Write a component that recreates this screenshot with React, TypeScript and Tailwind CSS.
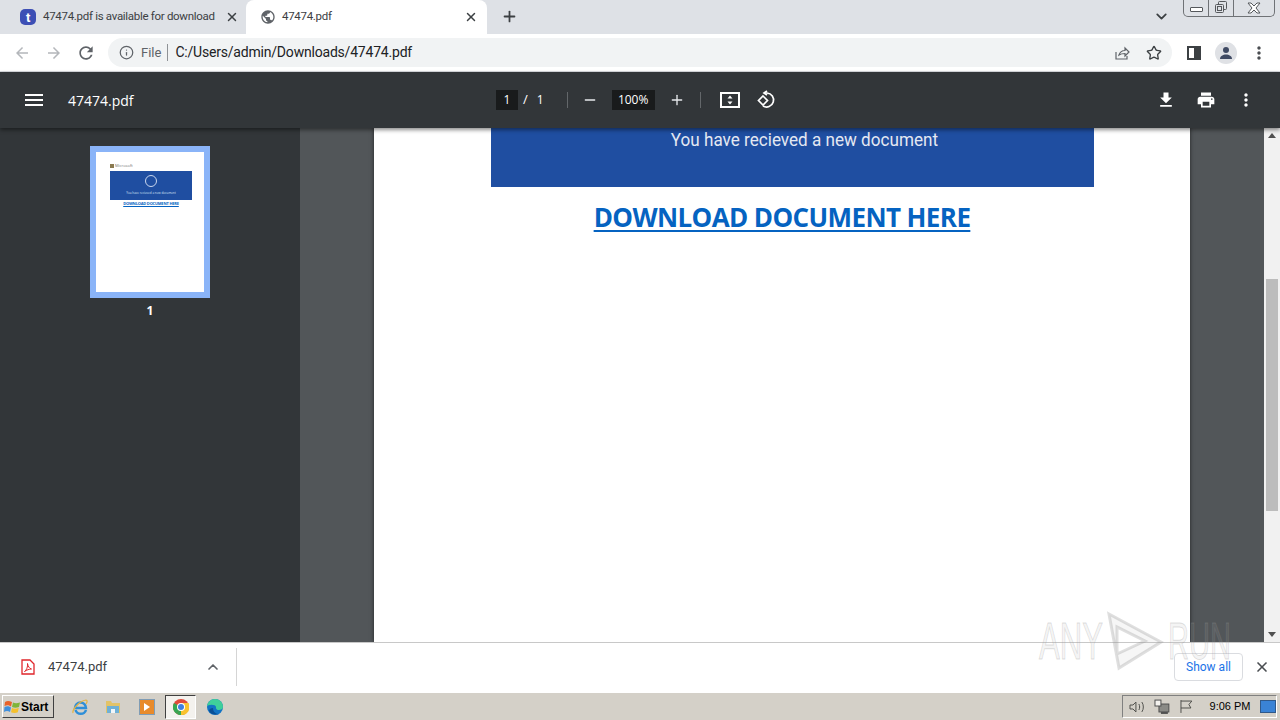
import { ChevronDown, ChevronUp, Info, Minus, Plus, Star, X } from "lucide-react";

const P = ({ d, size = 24, className = "" }: { d: string; size?: number; className?: string }) => (
  <svg width={size} height={size} viewBox="0 0 24 24" fill="currentColor" className={className}>
    <path d={d} />
  </svg>
);

const icons = {
  back: "M20 11H7.83l5.59-5.59L12 4l-8 8 8 8 1.41-1.41L7.83 13H20v-2z",
  forward: "M4 11h12.17l-5.59-5.59L12 4l8 8-8 8-1.41-1.41L16.17 13H4v-2z",
  reload:
    "M17.65 6.35C16.2 4.9 14.21 4 12 4c-4.42 0-7.99 3.58-7.99 8s3.57 8 7.99 8c3.73 0 6.84-2.55 7.73-6h-2.08c-.82 2.33-3.04 4-5.65 4-3.31 0-6-2.69-6-6s2.69-6 6-6c1.66 0 3.14.69 4.22 1.78L13 11h7V4l-2.35 2.35z",
  dots: "M12 8c1.1 0 2-.9 2-2s-.9-2-2-2-2 .9-2 2 .9 2 2 2zm0 2c-1.1 0-2 .9-2 2s.9 2 2 2 2-.9 2-2-.9-2-2-2zm0 6c-1.1 0-2 .9-2 2s.9 2 2 2 2-.9 2-2-.9-2-2-2z",
  globe:
    "M12 2C6.48 2 2 6.48 2 12s4.48 10 10 10 10-4.48 10-10S17.52 2 12 2zm-1 17.93c-3.95-.49-7-3.85-7-7.93 0-.62.08-1.21.21-1.79L9 15v1c0 1.1.9 2 2 2v1.93zm6.9-2.54c-.26-.81-1-1.39-1.9-1.39h-1v-3c0-.55-.45-1-1-1H8v-2h2c.55 0 1-.45 1-1V7h2c1.1 0 2-.9 2-2v-.41c2.93 1.19 5 4.06 5 7.41 0 2.08-.8 3.97-2.1 5.39z",
  download: "M19 9h-4V3H9v6H5l7 7 7-7zM5 18v2h14v-2H5z",
  print:
    "M19 8H5c-1.66 0-3 1.34-3 3v6h4v4h12v-4h4v-6c0-1.66-1.34-3-3-3zm-3 11H8v-5h8v5zm3-7c-.55 0-1-.45-1-1s.45-1 1-1 1 .45 1 1-.45 1-1 1zm-1-9H6v4h12V3z",
  menu: "M3 18h18v-2H3v2zm0-5h18v-2H3v2zm0-7v2h18V6H3z",
};

const TabStrip = () => (
  <div className="flex h-[34px] shrink-0 items-start bg-[#dee1e6] font-['Roboto',sans-serif] text-[11.5px] tracking-[-0.3px] text-[#3c4043]">
    <div className="flex h-[34px] w-[246px] items-center pl-[20px]">
      <div className="flex h-[16px] w-[16px] items-center justify-center rounded-[5px] bg-[#3d4fb5] text-[13px] font-bold leading-none text-white">
        t
      </div>
      <span className="ml-[7px] w-[172px] whitespace-nowrap">47474.pdf is available for download</span>
      <X size={14} strokeWidth={2.5} className="ml-[10px] text-[#3c4043]" />
    </div>
    <div className="flex h-[34px] w-[241px] items-center rounded-t-[8px] bg-white pl-[14px]">
      <P d={icons.globe} size={16} className="text-[#5f6368]" />
      <span className="ml-[6px] w-[182px]">47474.pdf</span>
      <X size={14} strokeWidth={2.5} className="text-[#3c4043]" />
    </div>
    <Plus size={17} strokeWidth={2.5} className="ml-[14px] mt-[8px] text-[#3c4043]" />
    <ChevronDown size={17} strokeWidth={2.5} className="ml-[635px] mt-[8px] text-[#3c4043]" />
    <div className="ml-[13px] flex h-[17px] w-[92px] rounded-b-[5px] border border-t-0 border-[#6f7276] text-[#55585c]">
      <div className="flex w-[25px] items-center justify-center border-r border-[#6f7276]">
        <div className="mt-[3px] h-[5px] w-[13px] rounded-[1px] border border-[#55585c] bg-white" />
      </div>
      <div className="flex w-[25px] items-center justify-center border-r border-[#6f7276]">
        <svg width="14" height="14" viewBox="0 0 14 14" fill="none" stroke="currentColor">
          <rect x="4.5" y="0.5" width="8" height="8" rx="1" />
          <rect x="1.5" y="3.5" width="8" height="8" rx="1" fill="#dee1e6" />
          <rect x="3.5" y="5.5" width="4" height="4" />
        </svg>
      </div>
      <div className="flex flex-1 items-center justify-center">
        <svg width="14" height="12" viewBox="0 0 14 12" fill="white" stroke="currentColor">
          <path d="M1 1h3l3 3 3-3h3L9 6l4 5h-3L7 8l-3 3H1l4-5z" />
        </svg>
      </div>
    </div>
  </div>
);

const Toolbar = () => (
  <div className="flex h-[38px] shrink-0 items-center border-b border-[#dadce0] bg-white pl-[13px] font-['Roboto',sans-serif] text-[#5f6368]">
    <P d={icons.back} size={18} className="text-[#b4b7bb]" />
    <P d={icons.forward} size={18} className="ml-[14px] text-[#b4b7bb]" />
    <P d={icons.reload} size={20} className="ml-[13px] text-[#5f6368]" />
    <div className="ml-[12px] flex h-[29px] w-[1064px] items-center rounded-full bg-[#f1f3f4] pl-[11px] pr-[10px]">
      <Info size={15} strokeWidth={2} />
      <span className="ml-[7px] text-[13px] text-[#5f6368]">File</span>
      <div className="ml-[6px] h-[17px] w-px bg-[#8f9296]" />
      <span className="ml-[7px] text-[14px] tracking-[-0.2px] text-[#202124]">C:/Users/admin/Downloads/47474.pdf</span>
      <svg
        width="16"
        height="16"
        viewBox="0 0 16 16"
        fill="none"
        stroke="currentColor"
        strokeWidth="1.2"
        className="ml-auto"
      >
        <path d="M2 7v7h11v-3M5 10c1-3 3-4.5 6-4.5V3l4 4-4 4V8.500c-2.500 0-4.500.5-6 1.500z" />
      </svg>
      <Star size={16} strokeWidth={2} className="ml-[16px] text-[#3c4043]" />
    </div>
    <div className="ml-[15px] flex h-[14px] w-[14px] justify-end border-2 border-[#3c4043] bg-white">
      <div className="h-full w-[5px] bg-[#3c4043]" />
    </div>
    <div className="ml-[14px] flex h-[22px] w-[22px] items-center justify-center overflow-hidden rounded-full bg-[#dfe1e5]">
      <svg width="14" height="14" viewBox="0 0 14 14" fill="#3f4a63">
        <circle cx="7" cy="4" r="3" />
        <path d="M1 13c0-3 3-4.500 6-4.500s6 1.500 6 4.500z" />
      </svg>
    </div>
    <P d={icons.dots} size={20} className="ml-[12px] text-[#4a4d51]" />
  </div>
);

const PdfToolbar = () => (
  <div className="relative z-10 flex h-[56px] shrink-0 items-center bg-[#323639] pl-[22px] pr-[24px] text-white shadow-[0_2px_4px_rgba(0,0,0,0.45)]">
    <P d={icons.menu} size={24} />
    <span className="ml-[22px] w-[428px] text-[14px] font-medium">47474.pdf</span>
    <div className="flex h-[20px] w-[22px] items-center justify-center bg-[#191b1c] text-[12px] font-medium">1</div>
    <span className="ml-[5px] text-[13px]">/</span>
    <span className="ml-[9px] text-[12px] font-medium">1</span>
    <div className="ml-[23px] h-[16px] w-px bg-[#63676a]" />
    <Minus size={16} strokeWidth={2} className="ml-[14px] text-[#e8eaed]" />
    <div className="ml-[14px] flex h-[20px] w-[43px] items-center justify-center bg-[#191b1c] text-[12px]">100%</div>
    <Plus size={16} strokeWidth={2} className="ml-[14px] text-[#e8eaed]" />
    <div className="ml-[15px] h-[16px] w-px bg-[#63676a]" />
    <svg width="20" height="16" viewBox="0 0 20 16" fill="none" stroke="white" strokeWidth="2" className="ml-[19px]">
      <rect x="1" y="1" width="18" height="14" />
      <path d="M10 3.500l-2.500 3h5zM10 12.500l-2.500-3h5z" fill="white" stroke="none" />
    </svg>
    <svg width="20" height="20" viewBox="0 0 20 20" fill="none" stroke="white" strokeWidth="1.700" className="ml-[16px]">
      <path d="M9 3h2a7 7 0 1 1-4 13" />
      <path d="M11 1L8 3l3 2" />
      <path d="M7 6l4.500 4.500L7 15l-4.500-4.500z" />
    </svg>
    <P d={icons.download} size={20} className="ml-auto" />
    <P d={icons.print} size={20} className="ml-[20px]" />
    <P d={icons.dots} size={20} className="ml-[20px]" />
  </div>
);

const Thumbnail = () => (
  <div className="flex w-[300px] shrink-0 flex-col items-center bg-[#323639] pt-[18px]">
    <div className="h-[152px] w-[120px] border-[6px] border-[#8ab4f8] bg-white pl-[14px] pt-[11px]">
      <div className="flex items-center gap-[1px] text-[4px] leading-[5px] text-[#737373]">
        <div className="h-[4px] w-[4px] bg-[#8a7a50]" />
        Microsoft
      </div>
      <div className="mt-[3px] flex h-[29px] w-[82px] flex-col items-center bg-[#1f4ea1]">
        <div className="mt-[4px] h-[12px] w-[12px] rounded-full border border-[#c9d6ee]" />
        <span className="mt-[4px] whitespace-nowrap text-[3px] leading-[4px] text-[#dbe4f5]">
          You have recieved a new document
        </span>
      </div>
      <div className="mt-[1px] w-[82px] text-center text-[4px] font-bold leading-[6px] tracking-[-0.2px] text-[#0563c1] underline">
        DOWNLOAD DOCUMENT HERE
      </div>
    </div>
    <span className="mt-[4px] text-[12px] font-bold text-white">1</span>
  </div>
);

const Viewer = () => (
  <div className="flex min-h-0 flex-1">
    <Thumbnail />
    <div className="flex flex-1 justify-center overflow-hidden bg-[#525659]">
      <div className="w-[816px] bg-white shadow-[0_0_4px_rgba(0,0,0,0.6)]">
        <div className="ml-[117px] flex h-[59px] w-[603px] justify-center bg-[#1f4ea1] pl-[23px]">
          <span className="mt-[-1px] inline-block h-[26px] scale-x-[0.9] whitespace-nowrap font-['Roboto',sans-serif] text-[19px] leading-[26px] text-[#e4e8f2]">
            You have recieved a new document
          </span>
        </div>
        <div className="mt-[12px] text-center text-[26px] font-bold leading-[36px] tracking-[-0.6px] text-[#0563c1] underline decoration-[2px] underline-offset-[3px]">
          DOWNLOAD DOCUMENT HERE
        </div>
      </div>
    </div>
    <div className="relative flex w-[16px] shrink-0 flex-col items-center bg-[#f1f1f1]">
      <div className="mt-[5px] h-0 w-0 border-x-[4px] border-b-[5px] border-x-transparent border-b-[#505050]" />
      <div className="mt-[141px] h-[232px] w-[12px] bg-[#bcbcbc]" />
      <div className="absolute bottom-[5px] h-0 w-0 border-x-[4px] border-t-[5px] border-x-transparent border-t-[#505050]" />
    </div>
  </div>
);

const DownloadBar = () => (
  <div className="flex h-[50px] shrink-0 items-center border-t border-[#c8c8c8] bg-white pb-[2px] pl-[21px] font-['Roboto',sans-serif] text-[#3c4043]">
    <svg width="14" height="16" viewBox="0 0 14 16" fill="none" stroke="#e0262b" strokeWidth="1.300">
      <path d="M1 1h8l4 4v10H1z" />
      <path d="M3.500 12.500c2-1 3.500-5 3-8 .5 3 2 5 4 5.500-2 0-5 1-7 2.500z" strokeWidth="1" />
    </svg>
    <span className="ml-[13px] w-[157px] text-[13px]">47474.pdf</span>
    <ChevronUp size={16} strokeWidth={2.5} className="text-[#5f6368]" />
    <div className="ml-[15px] h-[38px] w-px bg-[#d5d5d5]" />
    <div className="ml-[937px] flex h-[28px] w-[69px] items-center justify-center rounded-[4px] border border-[#dadce0] bg-white text-[12px] text-[#1a73e8]">
      Show all
    </div>
    <X size={16} strokeWidth={2.5} className="ml-[11px] text-[#4a4d51]" />
  </div>
);

const Taskbar = () => (
  <div className="flex h-[28px] shrink-0 items-center border-t border-white bg-[#d4d0c8] pl-[2px] font-['Liberation_Sans',sans-serif]">
    <div className="flex h-[23px] w-[52px] items-center border border-b-[#404040] border-l-white border-r-[#404040] border-t-white pl-[1px] text-[12px] font-bold text-black">
      <svg width="17" height="16" viewBox="0 0 17 16">
        <path d="M1 3c2-1.500 4-1.500 7 0L7 7.500C4.500 6 3 6 .5 7z" fill="#e8622a" />
        <path d="M9 3.500c2 1 4 1 7 0l-1 4.500c-2.500 1-4.500 1-7 0z" fill="#7fb539" />
        <path d="M.5 8c2.500-1 4-1 6.500.5L6 13c-2-1.500-4-1.500-6 0z" fill="#3f8fdc" />
        <path d="M8 9c2 1 4.500 1 6.800-.2l-1 4.500c-2 1-4.500 1-6.800 0z" fill="#f5c02c" />
      </svg>
      Start
    </div>
    <svg width="18" height="18" viewBox="0 0 18 18" fill="none" className="ml-[17px]">
      <path d="M4 10a5.500 5.500 0 1 1 11 0H4zM15 12a5.500 5.500 0 0 1-10.500 0" stroke="#2f8fd8" strokeWidth="2.500" />
      <path d="M2 15C1 12 8 3 15 2c1.500 0 1.500 2 0 4" stroke="#e3b341" strokeWidth="1.200" />
    </svg>
    <svg width="16" height="16" viewBox="0 0 16 16" className="ml-[16px]">
      <path d="M1 2h5l1 2h8v10H1z" fill="#e3c368" />
      <path d="M2 7h12v7H2z" fill="#6fb0d6" />
      <path d="M6 10h4v4H6z" fill="#f1f6f9" />
    </svg>
    <div className="ml-[18px] flex h-[16px] w-[16px] items-center justify-center border border-[#7f9cb5] bg-[#e88a2a]">
      <div className="h-0 w-0 border-y-[4px] border-l-[6px] border-y-transparent border-l-white" />
    </div>
    <div className="ml-[10px] flex h-[24px] w-[31px] items-center justify-center border border-b-white border-l-[#404040] border-r-white border-t-[#404040] bg-[#f4f2ee]">
      <svg width="16" height="16" viewBox="0 0 16 16">
        <circle cx="8" cy="8" r="8" fill="#e04a3a" />
        <path d="M8 8l6.900 4A8 8 0 0 1 4 15z" fill="#35a853" />
        <path d="M8 8L4 15A8 8 0 0 1 1 4z" fill="#35a853" />
        <path d="M8 4h7.500A8 8 0 0 1 8 16z" fill="#f9c22e" />
        <circle cx="8" cy="8" r="4" fill="white" />
        <circle cx="8" cy="8" r="3" fill="#3f7fe0" />
      </svg>
    </div>
    <svg width="16" height="16" viewBox="0 0 16 16" className="ml-[11px]">
      <circle cx="8" cy="8" r="8" fill="#1273c4" />
      <path d="M0 8a8 8 0 0 1 16 0c0 2-2 3-4 3-3 0-3-2-3-3 0-3-9-3-9 0z" fill="#3fcf9a" />
      <path d="M2 12c2 4 7 4 10 3-3 0-6-2-6-6-2 0-4 1-4 3z" fill="#0a4f96" />
    </svg>
    <div className="ml-[899px] flex h-[23px] w-[155px] items-center border border-b-white border-l-[#808080] border-r-white border-t-[#808080] pl-[6px] text-[#50504c]">
      <svg width="16" height="14" viewBox="0 0 16 14" fill="none" stroke="currentColor">
        <path d="M1 5h3l3-3v10L4 9H1zM10 4c1 2 1 4 0 6M13 2c2 3 2 7 0 10" />
      </svg>
      <svg width="16" height="16" viewBox="0 0 16 16" className="ml-[9px]">
        <rect x="5" y="5" width="10" height="8" fill="#8a8a86" stroke="#505050" />
        <rect x="1" y="1" width="6" height="6" fill="#f4f2ee" stroke="#505050" />
        <path d="M7 14h7" stroke="#505050" strokeWidth="2" />
      </svg>
      <svg width="14" height="15" viewBox="0 0 14 15" fill="none" stroke="currentColor" className="ml-[9px]">
        <path d="M2 1v13M2 2h11l-3 3.500L12 9H2" />
      </svg>
      <span className="ml-[17px] w-[42px] whitespace-nowrap text-[11px] text-black">9:06 PM</span>
      <div className="ml-[9px] h-[13px] w-[16px] border border-[#30598a] bg-[#3a83d6]" />
    </div>
  </div>
);

const Watermark = () => (
  <div className="pointer-events-none absolute left-[1039px] top-[610px] flex h-[62px] items-center font-['Liberation_Sans',sans-serif] text-[52px] leading-[60px] text-[rgba(170,170,170,0.14)] [-webkit-text-stroke:1px_rgba(150,150,150,0.3)]">
    <div className="w-[65px]">
      <span className="inline-block origin-left scale-x-[0.6]">ANY</span>
    </div>
    <svg width="62" height="62" viewBox="0 0 62 62" fill="rgba(170,170,170,0.1)" stroke="rgba(150,150,150,0.3)" strokeWidth="3">
      <path d="M5 4l52 28-42 26zM13 17v27l28-13z" fillRule="evenodd" />
    </svg>
    <div className="ml-[2px] w-[62px]">
      <span className="inline-block origin-left scale-x-[0.56]">RUN</span>
    </div>
  </div>
);

export default function App() {
  return (
    <div className="relative flex h-[720px] w-[1280px] flex-col overflow-hidden bg-white font-['Open_Sans',sans-serif]">
      <TabStrip />
      <Toolbar />
      <PdfToolbar />
      <Viewer />
      <DownloadBar />
      <Taskbar />
      <Watermark />
    </div>
  );
}
